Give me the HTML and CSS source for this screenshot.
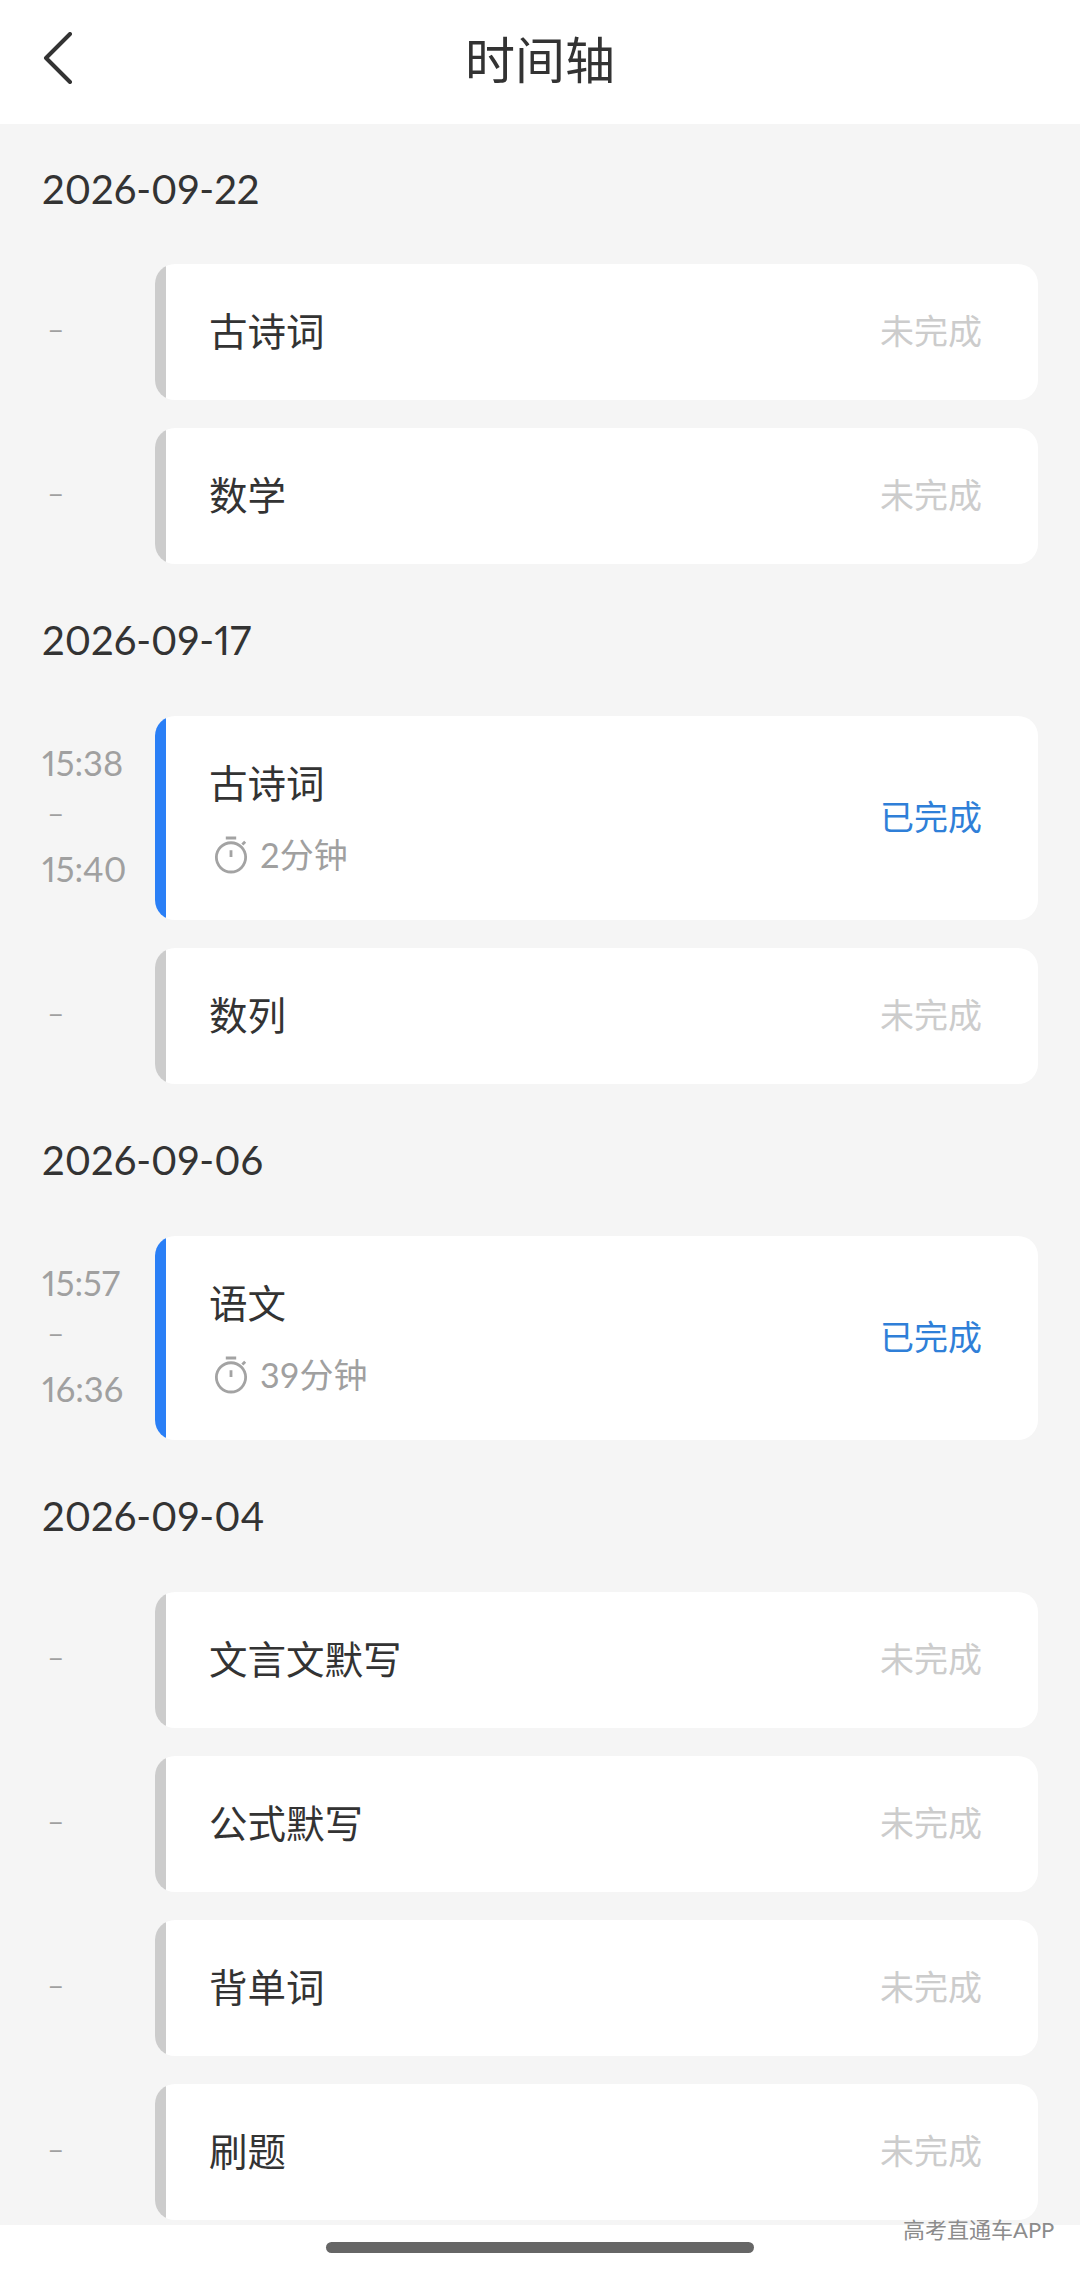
FILE: index.html
```html
<!DOCTYPE html>
<html lang="zh-CN">
<head>
  <meta charset="UTF-8">
  <meta name="viewport" content="width=device-width, initial-scale=1.0">
  <title>时间轴</title>
  <link rel="stylesheet" href="styles.css">
</head>
<body>

  <div class="status-dot"></div>

  <div class="header">
    <svg class="back" width="30" height="52" viewBox="0 0 30 52">
      <path d="M27 2 L3 26 L27 50" fill="none" stroke="#333" stroke-width="4" stroke-linecap="round" stroke-linejoin="round"/>
    </svg>
    <div class="title">时间轴</div>
  </div>

  <div class="timeline">
    <div class="date date-first">2026-09-22</div>
    <div class="row">
      <div class="time"><div class="dash">–</div></div>
      <div class="card"><div class="bar"></div><div class="info"><div class="name">古诗词</div></div><div class="state">未完成</div></div>
    </div>
    <div class="row">
      <div class="time"><div class="dash">–</div></div>
      <div class="card"><div class="bar"></div><div class="info"><div class="name">数学</div></div><div class="state">未完成</div></div>
    </div>

    <div class="date">2026-09-17</div>
    <div class="row">
      <div class="time times"><div>15:38</div><div class="dash">–</div><div>15:40</div></div>
      <div class="card done">
        <div class="bar"></div>
        <div class="info">
          <div class="name">古诗词</div>
          <div class="used">
            <svg class="clock" width="34" height="38" viewBox="0 0 36 40">
              <g fill="none" stroke="#a3a3a3" stroke-width="3">
                <circle cx="18" cy="22.5" r="15.5"/>
                <path d="M12.5 2h11M18 15v7M30 9l3 -3"/>
              </g>
            </svg>
            <span>2分钟</span>
          </div>
        </div>
        <div class="state">已完成</div>
      </div>
    </div>
    <div class="row">
      <div class="time"><div class="dash">–</div></div>
      <div class="card"><div class="bar"></div><div class="info"><div class="name">数列</div></div><div class="state">未完成</div></div>
    </div>

    <div class="date">2026-09-06</div>
    <div class="row">
      <div class="time times"><div>15:57</div><div class="dash">–</div><div>16:36</div></div>
      <div class="card done">
        <div class="bar"></div>
        <div class="info">
          <div class="name">语文</div>
          <div class="used">
            <svg class="clock" width="34" height="38" viewBox="0 0 36 40">
              <g fill="none" stroke="#a3a3a3" stroke-width="3">
                <circle cx="18" cy="22.5" r="15.5"/>
                <path d="M12.5 2h11M18 15v7M30 9l3 -3"/>
              </g>
            </svg>
            <span>39分钟</span>
          </div>
        </div>
        <div class="state">已完成</div>
      </div>
    </div>

    <div class="date">2026-09-04</div>
    <div class="row">
      <div class="time"><div class="dash">–</div></div>
      <div class="card"><div class="bar"></div><div class="info"><div class="name">文言文默写</div></div><div class="state">未完成</div></div>
    </div>
    <div class="row">
      <div class="time"><div class="dash">–</div></div>
      <div class="card"><div class="bar"></div><div class="info"><div class="name">公式默写</div></div><div class="state">未完成</div></div>
    </div>
    <div class="row">
      <div class="time"><div class="dash">–</div></div>
      <div class="card"><div class="bar"></div><div class="info"><div class="name">背单词</div></div><div class="state">未完成</div></div>
    </div>
    <div class="row">
      <div class="time"><div class="dash">–</div></div>
      <div class="card"><div class="bar"></div><div class="info"><div class="name">刷题</div></div><div class="state">未完成</div></div>
    </div>
  </div>

  <div class="footer">
    <div class="home-bar"></div>
  </div>

  <div class="watermark">高考直通车APP</div>

</body>
</html>
```

FILE: styles.css
```css
html, body {
  margin: 0;
  padding: 0;
}

body {
  position: relative;
  width: 1080px;
  height: 2270px;
  overflow: hidden;
  display: flex;
  flex-direction: column;
  background-color: #f5f5f5;
  font-family: Lato, "Noto Sans CJK SC", sans-serif;
  color: #333;
}

.status-dot {
  position: absolute;
  left: 709px;
  top: -10px;
  width: 14px;
  height: 14px;
  border-radius: 50%;
  background-color: #ff7a3c;
}

.header {
  height: 124px;
  flex-shrink: 0;
  background-color: #fff;
  display: flex;
  align-items: center;
  justify-content: center;
  position: relative;
}

.back {
  position: absolute;
  left: 43px;
  top: 32px;
}

.title {
  font-size: 50px;
  line-height: 56px;
  margin-bottom: 4px;
}

.timeline {
  flex: 1;
  padding: 0 42px;
  overflow: hidden;
}

.date {
  font-size: 40px;
  line-height: 60px;
  padding: 46px 0;
  font-variant-numeric: proportional-nums;
}

.date-first {
  padding: 35px 0 45px;
}

.row {
  display: flex;
  align-items: center;
  margin-bottom: 28px;
}

.row:has(+ .date) {
  margin-bottom: 0;
}

.time {
  width: 113px;
  flex-shrink: 0;
  font-size: 35px;
  line-height: 53px;
  color: #a0a0a0;
  font-variant-numeric: proportional-nums;
}

.times {
  width: 113px;
  font-size: 34.5px;
  padding-bottom: 5px;
}

.dash {
  padding-left: 6px;
  font-family: Roboto, sans-serif;
  font-size: 24px;
}

.times .dash {
  padding-top: 2px;
  line-height: 51px;
}

.card {
  width: 883px;
  min-height: 136px;
  flex-shrink: 0;
  display: flex;
  align-items: stretch;
  background-color: #fff;
  border-radius: 20px;
  overflow: hidden;
}

.bar {
  width: 11px;
  flex-shrink: 0;
  background-color: #ccc;
}

.info {
  flex: 1;
  padding-left: 43px;
  padding-bottom: 3px;
  display: flex;
  flex-direction: column;
  justify-content: center;
  gap: 23px;
}

.done .info {
  padding-top: 42px;
  padding-bottom: 41px;
}

.name {
  font-size: 38.5px;
  line-height: 50px;
}

.used {
  display: flex;
  align-items: center;
  gap: 12px;
  font-size: 34px;
  line-height: 48px;
  color: #a0a0a0;
}

.clock {
  margin-left: 5px;
}

.state {
  display: flex;
  align-items: center;
  padding-right: 56px;
  padding-bottom: 6px;
  font-size: 34px;
  color: #ccc;
}

.done .bar {
  background-color: #2a7ff6;
}

.done .state {
  color: #2f7fd8;
}

.footer {
  height: 45px;
  flex-shrink: 0;
  background-color: #fff;
  display: flex;
  justify-content: center;
  padding-top: 17px;
  box-sizing: border-box;
}

.home-bar {
  width: 428px;
  height: 11px;
  border-radius: 6px;
  background-color: #666;
}

.watermark {
  position: absolute;
  left: 903px;
  top: 2217px;
  font-size: 22px;
  line-height: 26px;
  color: #8c8c8c;
}
```
